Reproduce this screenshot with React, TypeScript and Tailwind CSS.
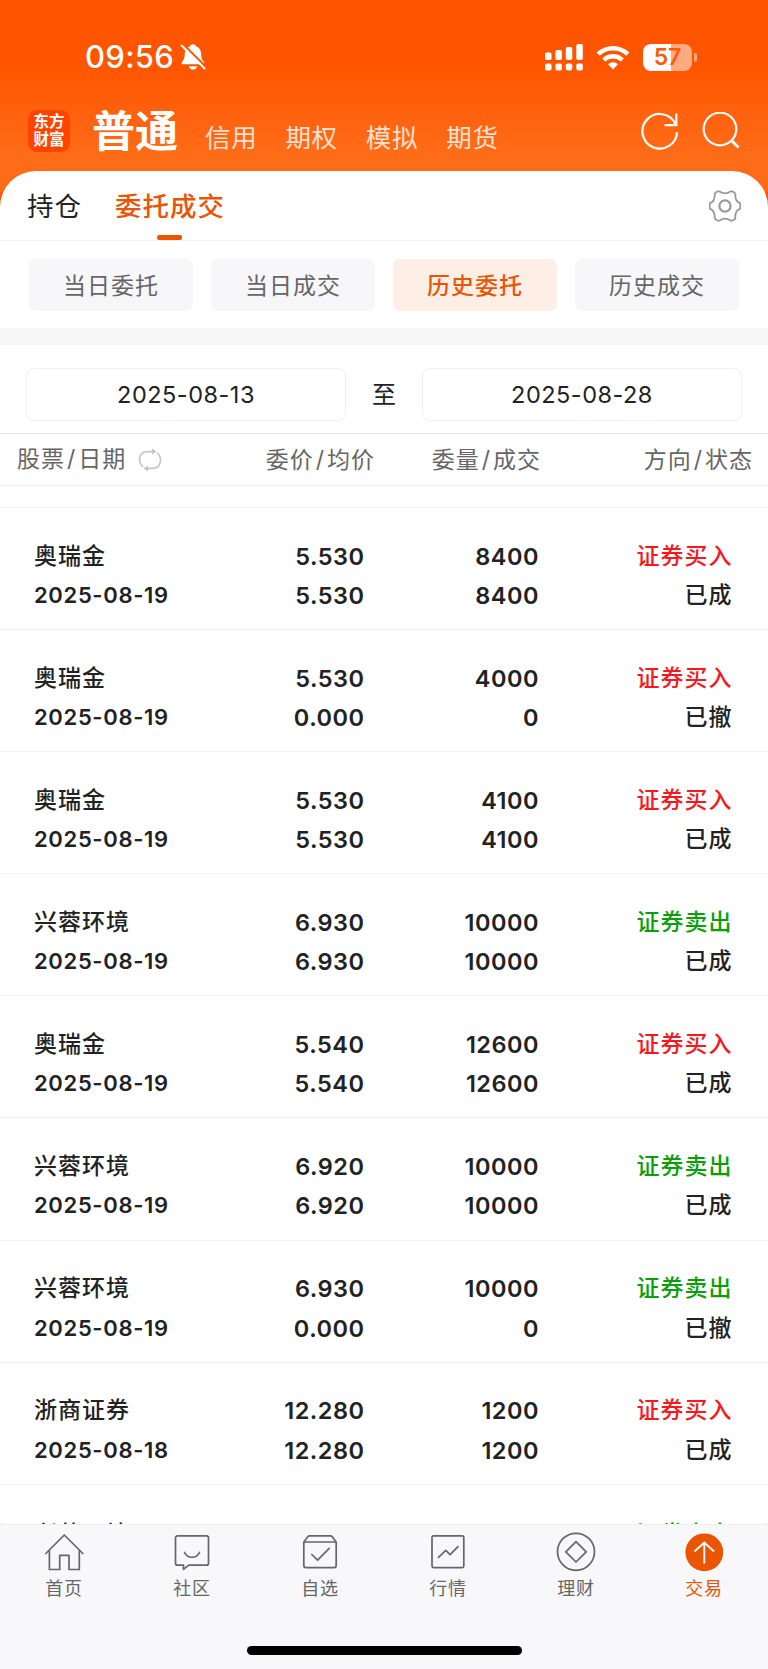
import { useState } from "react";
import clsx from "clsx";

/* ------------------------------------------------------------------ */
/*  Data                                                              */
/* ------------------------------------------------------------------ */

type Order = {
  name: string;
  date: string;
  price: string;
  avg: string;
  qty: string;
  filled: string;
  side: "buy" | "sell";
  status: string;
};

const ORDERS: Order[] = [
  { name: "奥瑞金", date: "2025-08-19", price: "5.530", avg: "5.530", qty: "8400", filled: "8400", side: "buy", status: "已成" },
  { name: "奥瑞金", date: "2025-08-19", price: "5.530", avg: "0.000", qty: "4000", filled: "0", side: "buy", status: "已撤" },
  { name: "奥瑞金", date: "2025-08-19", price: "5.530", avg: "5.530", qty: "4100", filled: "4100", side: "buy", status: "已成" },
  { name: "兴蓉环境", date: "2025-08-19", price: "6.930", avg: "6.930", qty: "10000", filled: "10000", side: "sell", status: "已成" },
  { name: "奥瑞金", date: "2025-08-19", price: "5.540", avg: "5.540", qty: "12600", filled: "12600", side: "buy", status: "已成" },
  { name: "兴蓉环境", date: "2025-08-19", price: "6.920", avg: "6.920", qty: "10000", filled: "10000", side: "sell", status: "已成" },
  { name: "兴蓉环境", date: "2025-08-19", price: "6.930", avg: "0.000", qty: "10000", filled: "0", side: "sell", status: "已撤" },
  { name: "浙商证券", date: "2025-08-18", price: "12.280", avg: "12.280", qty: "1200", filled: "1200", side: "buy", status: "已成" },
];

// only the top edge of this one shows above the nav
const NEXT_ORDER = { name: "兴蓉环境", price: "6.930", qty: "10000", side: "证券卖出" };

const MARKETS = ["信用", "期权", "模拟", "期货"];
const FILTERS = ["当日委托", "当日成交", "历史委托", "历史成交"];

/* ------------------------------------------------------------------ */
/*  Icons                                                             */
/* ------------------------------------------------------------------ */

function BellOff() {
  return (
    <svg className="h-[28px] w-[26px]" viewBox="0 0 26 28" fill="none">
      <path d="M13 1.2c1.5 0 2.6.9 2.9 2.1 3.2 1.1 5 3.7 5.2 7.2.2 4.6.8 6.2 2.6 8.2.9 1 .4 2.5-1 2.5H3.100c-1.400 0-1.900-1.500-1-2.500 1.800-2 2.500-3.600 2.700-8.200.2-3.500 2-6.100 5.300-7.200.3-1.200 1.400-2.100 2.900-2.100z" fill="#fff" />
      <path d="M8.800 23.200h8.400c-.5 2-2.200 3.400-4.200 3.400s-3.700-1.400-4.200-3.400z" fill="#fff" />
      <path d="M3.200 1.200 26 24" stroke="#ff5601" strokeWidth="2" />
      <path d="M1.600 2.500 24.600 25.500" stroke="#fff" strokeWidth="1.900" strokeLinecap="round" />
    </svg>
  );
}

function Signal() {
  return (
    <svg className="h-[27px] w-[38px]" viewBox="0 0 38 27" fill="#fff">
      <rect x="0" y="8.500" width="6.500" height="7.500" rx="1.800" />
      <rect x="10.400" y="6" width="6.500" height="10" rx="1.800" />
      <rect x="20.800" y="3" width="6.500" height="13" rx="1.800" />
      <rect x="31.300" y="0" width="6.500" height="16" rx="1.800" />
      <rect x="0" y="19.500" width="6.500" height="7" rx="1.800" />
      <rect x="10.400" y="19.500" width="6.500" height="7" rx="1.800" />
      <rect x="20.800" y="19.500" width="6.500" height="7" rx="1.800" />
      <rect x="31.300" y="19.500" width="6.500" height="7" rx="1.800" />
    </svg>
  );
}

function Wifi() {
  return (
    <svg className="h-[25px] w-[34px]" viewBox="0 0 34 25" fill="none" stroke="#fff" strokeWidth="4.400">
      <path d="M2.200 9.200a21.500 21.500 0 0 1 29.600 0" />
      <path d="M7.700 15a13.500 13.500 0 0 1 18.600 0" />
      <path d="M17 24.500l-5-5.200a7.200 7.200 0 0 1 10 0z" fill="#fff" stroke="none" />
    </svg>
  );
}

function Battery() {
  return (
    <div className="flex items-center gap-[2px]">
      <div className="flex h-[27px] w-[49px] items-center justify-center rounded-[8px] bg-linear-to-r from-white from-57% to-white/50 to-57%">
        <span className="text-[23px] font-semibold text-[#ff5a08]">57</span>
      </div>
      <div className="h-[9px] w-[3px] rounded-r-full bg-white/50" />
    </div>
  );
}

function Refresh() {
  return (
    <svg className="h-[38px] w-[38px]" viewBox="0 0 38 38" fill="none" stroke="#fff" strokeWidth="2.200">
      <path d="M36 20A17.300 17.300 0 1 1 34.300 11.800" />
      <path d="M35.300 1.500v11.600H23.500" />
    </svg>
  );
}

function Search() {
  return (
    <svg className="h-[38px] w-[38px]" viewBox="0 0 38 38" fill="none" stroke="#fff" strokeWidth="2.200">
      <circle cx="18" cy="17" r="16.300" />
      <path d="M29 28 36.500 35.500" strokeWidth="2.800" />
    </svg>
  );
}

function Gear() {
  return (
    <svg className="h-[32px] w-[32px]" viewBox="0 0 32 32" fill="none" stroke="#999" strokeWidth="1.800" strokeLinejoin="round">
      <path d="M8.600 1.500c.8-.4 1.400-.4 2 .1 3.200 2 7.600 2 10.800 0 .6-.5 1.200-.5 2-.1l2.200 1.300c.6.4.8.9.7 1.600-.2 4.200 1.400 7.300 4.100 8.500.6.300.9.800.9 1.500v3.200c0 .7-.3 1.200-.9 1.500-2.700 1.200-4.300 4.300-4.100 8.500.1.700-.1 1.200-.7 1.600l-2.200 1.300c-.8.4-1.400.4-2-.1-3.200-2-7.600-2-10.800 0-.6.5-1.200.5-2 .1l-2.200-1.300c-.6-.4-.8-.9-.7-1.600.2-4.200-1.400-7.300-4.100-8.500-.6-.3-.9-.8-.9-1.500v-3.200c0-.7.3-1.200.9-1.500 2.700-1.200 4.300-4.300 4.100-8.500-.1-.7.100-1.200.7-1.600z" />
      <circle cx="16" cy="16" r="5.600" strokeWidth="2.200" />
    </svg>
  );
}

function Swap() {
  return (
    <svg className="h-[24px] w-[24px]" viewBox="0 0 24 24" fill="none" stroke="#c4c4c4" strokeWidth="1.600" strokeLinecap="round">
      <path d="M4.300 18.300C-1 12 1.500 3.800 9.500 3.600H15" />
      <path d="M19.700 5C25 11.300 22.500 20.200 14.500 20.400H9" />
      <path d="M14 .6 18.500 3.600 14 6.600zM10 17.400 5.500 20.400l4.500 3z" fill="#c4c4c4" stroke="none" />
    </svg>
  );
}

const navIcon = "h-[40px] w-[40px]";

function HomeIcon() {
  return (
    <svg className={navIcon} viewBox="0 0 40 40" fill="none" stroke="#666" strokeWidth="1.700" strokeLinejoin="round">
      <path d="M1.300 22 20.300 3l19 19" />
      <path d="M5.400 18.500v19h10.300V23.300h9.300v14.200h10.300v-19" />
    </svg>
  );
}

function ChatIcon() {
  return (
    <svg className={navIcon} viewBox="0 0 40 40" fill="none" stroke="#666" strokeWidth="1.700" strokeLinejoin="round" strokeLinecap="round">
      <path d="M5.500 3.800h29a2 2 0 0 1 2 2v25.400a2 2 0 0 1-2 2H16.700l-5.200 4.200v-4.200h-6a2 2 0 0 1-2-2V5.800a2 2 0 0 1 2-2z" />
      <path d="M12.500 20.500a8.300 8.300 0 0 0 15 0" />
    </svg>
  );
}

function BoxIcon() {
  return (
    <svg className={navIcon} viewBox="0 0 40 40" fill="none" stroke="#666" strokeWidth="1.700" strokeLinejoin="round" strokeLinecap="round">
      <path d="M3.800 10 8 4.600a2 2 0 0 1 1.600-.8h20.800a2 2 0 0 1 1.600.8l4.200 5.400v23.600a2 2 0 0 1-2 2H5.800a2 2 0 0 1-2-2zM4 10h32" />
      <path d="M11.800 22.500l5.800 5.700 11.600-11.800" />
    </svg>
  );
}

function ChartIcon() {
  return (
    <svg className={navIcon} viewBox="0 0 40 40" fill="none" stroke="#666" strokeWidth="1.700" strokeLinejoin="round" strokeLinecap="round">
      <rect x="4" y="3.800" width="31.800" height="31.800" rx="1.500" />
      <path d="M10.500 25.300l7.300-7 4.300 4.300 7.900-8" />
    </svg>
  );
}

function WealthIcon() {
  return (
    <svg className={navIcon} viewBox="0 0 40 40" fill="none" stroke="#666" strokeWidth="1.700" strokeLinejoin="round">
      <circle cx="20" cy="19.800" r="18.500" />
      <path d="M20 9.600 30.200 19.800 20 30 9.800 19.800z" />
    </svg>
  );
}

function TradeIcon() {
  return (
    <svg className={navIcon} viewBox="0 0 40 40" fill="none">
      <circle cx="20.300" cy="20.300" r="18.900" fill="#ea5504" />
      <path d="M20.300 31.500V11M10.500 19.500 20.300 10.500l9.800 9" stroke="#fff" strokeWidth="1.900" />
    </svg>
  );
}

const NAV = [
  { label: "首页", icon: HomeIcon },
  { label: "社区", icon: ChatIcon },
  { label: "自选", icon: BoxIcon },
  { label: "行情", icon: ChartIcon },
  { label: "理财", icon: WealthIcon },
  { label: "交易", icon: TradeIcon },
];

/* ------------------------------------------------------------------ */
/*  Rows                                                              */
/* ------------------------------------------------------------------ */

const rowCls =
  "grid shrink-0 grid-cols-[200px_130.500px_174.500px_193.500px] border-t border-[#f2f2f2] pl-[34px] text-[23.500px] leading-[39.500px] font-semibold text-[#222]";

function OrderRow({ order }: { order: Order }) {
  return (
    <div className={clsx(rowCls, "h-[122.100px] pt-[28.500px]")}>
      <div>
        <div className="text-[23px] font-medium tracking-[1px]">{order.name}</div>
        <div className="text-[22px] tracking-[0.65px]">{order.date}</div>
      </div>
      <div className="text-right tracking-[0.5px]">
        <div>{order.price}</div>
        <div>{order.avg}</div>
      </div>
      <div className="text-right tracking-[0.5px]">
        <div>{order.qty}</div>
        <div>{order.filled}</div>
      </div>
      <div className="text-right text-[23px] font-medium tracking-[1px]">
        <div className={order.side === "buy" ? "text-[#f5191e]" : "text-[#0a9f0a]"}>
          {order.side === "buy" ? "证券买入" : "证券卖出"}
        </div>
        <div>{order.status}</div>
      </div>
    </div>
  );
}

/* ------------------------------------------------------------------ */
/*  Page                                                              */
/* ------------------------------------------------------------------ */

export default function App() {
  const [filter, setFilter] = useState("历史委托");
  const [active, setActive] = useState("交易");

  return (
    <div className="flex h-[1669px] w-[768px] flex-col overflow-hidden bg-[#f8f8fa] font-['Inter','Noto_Sans_CJK_SC',sans-serif]">
      <div className="flex h-[1524px] flex-col bg-[linear-gradient(#ff5500_0px,#ff5500_66px,#ff6c18_155px,#ff6c18_192px,#ff5500_192px,#ff5500_260px,#f2f2f4_260px)]">
        {/* Status bar */}
        <div className="flex h-[86px] shrink-0 items-center justify-between pt-[28px] pr-[71px] pl-[85px]">
          <div className="flex items-center gap-[6px]">
            <span className="mt-px text-[31px] font-medium tracking-[0.3px] text-white">09:56</span>
            <BellOff />
          </div>
          <div className="flex items-center gap-[13px]">
            <Signal />
            <Wifi />
            <Battery />
          </div>
        </div>

        {/* Account header */}
        <div className="flex h-[85px] shrink-0 items-center pl-[28px]">
          <div className="mt-[5px] flex h-[42px] w-[42px] flex-col items-center justify-center rounded-[9px] bg-[#ff4400] text-[15.500px] leading-[18px] font-bold text-white">
            <span>东方</span>
            <span>财富</span>
          </div>
          <div className="mt-[4px] ml-[22px] text-[43px] leading-[50px] font-bold text-white">普通</div>
          <div className="mt-[19px] ml-[27px] flex gap-[28px] text-[25.500px] leading-[36px] text-white/80">
            {MARKETS.map((m) => (
              <span key={m} className="tracking-[0.700px]">{m}</span>
            ))}
          </div>
          <div className="mt-[5px] mr-[28px] ml-auto flex gap-[23px]">
            <Refresh />
            <Search />
          </div>
        </div>

        <div className="flex min-h-0 flex-1 flex-col overflow-hidden rounded-t-[36px] rounded-b-[5px] bg-white">
          {/* Tabs */}
          <div className="flex h-[70px] shrink-0 items-stretch border-b border-[#f2f2f2] pr-[27px] pl-[27px] text-[26.500px] leading-[70px] tracking-[1px]">
            <span className="text-[#222]">持仓</span>
            <div className="relative ml-[33px] font-medium text-[#ea5504]">
              委托成交
              <span className="absolute bottom-0 left-[42px] h-[5px] w-[25px] rounded-[2px] bg-[#ea5504]" />
            </div>
            <div className="ml-auto flex items-center">
              <Gear />
            </div>
          </div>

          {/* Filter buttons */}
          <div className="grid h-[87px] shrink-0 grid-cols-4 gap-[18px] px-[29px] pt-[18px]">
            {FILTERS.map((f) => (
              <button
                key={f}
                onClick={() => setFilter(f)}
                className={clsx(
                  "h-[52px] rounded-[7px] pt-[2px] text-[23px] tracking-[1px]",
                  f === filter ? "bg-[#fdeee6] font-medium text-[#ea5504]" : "bg-[#f7f7f9] text-[#666]"
                )}
              >
                {f}
              </button>
            ))}
          </div>
          <div className="h-[17px] shrink-0 bg-[#f6f7f9]" />

          {/* Date range */}
          <div className="flex h-[89px] shrink-0 items-start border-b border-[#e2e2e2] px-[26px] pt-[23px] text-[23.500px] leading-[51px] text-[#222]">
            <div className="h-[53px] w-[320px] rounded-[8px] border border-[#f0f0f0] text-center tracking-[0.5px]">2025-08-13</div>
            <div className="flex-1 pt-px text-center text-[24px]">至</div>
            <div className="h-[53px] w-[320px] rounded-[8px] border border-[#f0f0f0] text-center tracking-[0.5px]">2025-08-28</div>
          </div>

          {/* Column titles */}
          <div className="grid h-[52px] shrink-0 grid-cols-[200px_158px_166px_212px] border-b border-[#f2f2f2] pl-[17px] text-[23px] leading-[53px] tracking-[1px] text-[#666]">
            <div className="flex h-[51px] items-center gap-[12px]">
              <span>股票<span className="px-[2px]">/</span>日期</span>
              <Swap />
            </div>
            <div className="text-right">委价<span className="px-[2px]">/</span>均价</div>
            <div className="text-right">委量<span className="px-[2px]">/</span>成交</div>
            <div className="text-right">方向<span className="px-[2px]">/</span>状态</div>
          </div>

          {/* Orders */}
          <div className="flex min-h-0 flex-1 flex-col overflow-hidden pt-[21px]">
            {ORDERS.map((o, i) => (
              <OrderRow key={i} order={o} />
            ))}
            <div className={clsx(rowCls, "h-[40px] overflow-hidden pt-[30px]")}>
              <div className="text-[23px] font-medium tracking-[1px]">{NEXT_ORDER.name}</div>
              <div className="text-right tracking-[0.500px]">{NEXT_ORDER.price}</div>
              <div className="text-right tracking-[0.500px]">{NEXT_ORDER.qty}</div>
              <div className="text-right text-[23px] font-medium tracking-[1px] text-[#0a9f0a]">{NEXT_ORDER.side}</div>
            </div>
          </div>
        </div>
      </div>

      {/* Bottom nav */}
      <div className="grid h-[120px] shrink-0 grid-cols-6 border-t border-[#efeff1] pt-[7px]">
        {NAV.map(({ label, icon: Icon }) => (
          <button
            key={label}
            onClick={() => setActive(label)}
            className={clsx("flex flex-col items-center text-[18px] leading-[34px] tracking-[0.800px]", active === label ? "text-[#ea5504]" : "text-[#666]")}
          >
            <Icon />
            {label}
          </button>
        ))}
      </div>
      <div className="mx-auto mt-[1.500px] h-[9px] w-[275px] shrink-0 rounded-full bg-black" />
    </div>
  );
}
